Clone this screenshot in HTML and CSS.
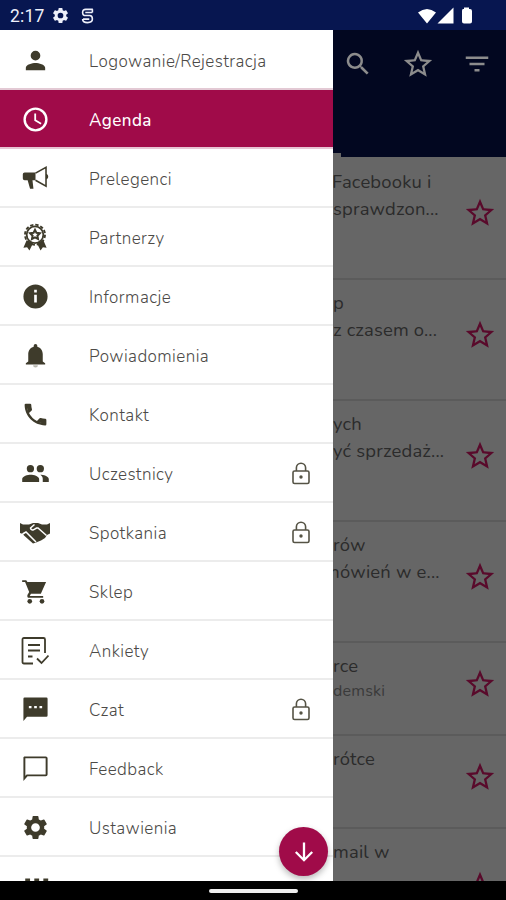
FILE: index.html
```html
<!DOCTYPE html>
<html lang="pl">
<head>
<meta charset="utf-8">
<title>Agenda</title>
<link rel="stylesheet" href="styles.css">
</head>
<body>
<svg class="defs" width="0" height="0">
  <symbol id="star" viewBox="0 0 24 24"><path d="M22 9.24l-7.19-.62L12 2 9.19 8.63 2 9.24l5.46 4.73L5.82 21 12 17.27 18.18 21l-1.63-7.03L22 9.24zM12 15.4l-3.76 2.27 1-4.28-3.32-2.88 4.38-.38L12 6.1l1.71 4.04 4.38.38-3.32 2.88 1 4.28L12 15.4z"/></symbol>
  <symbol id="gear" viewBox="0 0 24 24"><path fill-rule="evenodd" d="M19.14 12.94c.04-.3.06-.61.06-.94s-.02-.64-.07-.94l2.03-1.58a.49.49 0 0 0 .12-.61l-1.92-3.32a.49.49 0 0 0-.59-.22l-2.39.96a7 7 0 0 0-1.62-.94l-.36-2.54a.48.48 0 0 0-.48-.41h-3.84a.48.48 0 0 0-.47.41l-.36 2.54c-.59.24-1.13.57-1.62.94l-2.39-.96a.48.48 0 0 0-.59.22L2.74 8.87a.48.48 0 0 0 .12.61l2.03 1.58a6 6 0 0 0-.02 1.88l-2.03 1.58a.49.49 0 0 0-.12.61l1.92 3.32c.12.22.37.29.59.22l2.39-.96c.5.38 1.03.7 1.62.94l.36 2.54c.05.24.24.41.48.41h3.84c.24 0 .44-.17.47-.41l.36-2.54c.59-.24 1.13-.56 1.62-.94l2.39.96c.22.08.47 0 .59-.22l1.92-3.32a.48.48 0 0 0-.12-.61zM12 15.6A3.6 3.6 0 1 1 12 8.4a3.6 3.6 0 0 1 0 7.2z"/></symbol>
  <symbol id="lock" viewBox="0 0 24 26"><g fill="none" stroke="currentColor" stroke-width="1.6"><rect x="4" y="10" width="16" height="12.500" rx="1.6"/><path d="M7.4 10V6.800a4.600 4.600 0 0 1 9.200 0V10"/></g><circle cx="12" cy="16" r="1.700"/></symbol>
</svg>
<header class="status">
  <span class="time">2:17</span>
  <svg class="status-gear"><use href="#gear"/></svg>
  <svg class="status-s" viewBox="0 0 14 18"><path fill="none" stroke="currentColor" stroke-width="1.800" d="M13 1.500H5Q1.500 1.500 1.500 5T5 8.500H9.500Q12.500 8.500 12.500 12.500T7 16.500T1.500 12.500M4.500 5H12.500M2 12.500H9M12.500 1.500V5"/></svg>
  <svg class="status-right" viewBox="0 0 58 20"><path d="M1 6.500Q10 -.500 19 6.500L10 17.500zM20.500 17.500L36.500 1.500V17.500zM46 3h1V1.500h5V3h1q2 0 2 2V15.500q0 2-2 2h-6q-2 0-2-2V5q0-2 1-2z"/></svg>
</header>
<div class="screen">
  <nav class="drawer">
    <a class="item top"><svg viewBox="0 0 24 24"><path d="M12 12a4 4 0 1 0 0-8 4 4 0 0 0 0 8zm0 2c-2.700 0-8 1.300-8 4v2h16v-2c0-2.700-5.300-4-8-4z"/></svg><span>Logowanie/Rejestracja</span></a>
    <a class="item active"><svg viewBox="0 0 24 24"><path d="M12 2a10 10 0 1 0 0 20 10 10 0 0 0 0-20zm0 18a8 8 0 1 1 0-16 8 8 0 0 1 0 16zm.5-13H11v6l5.250 3.150.750-1.230-4.500-2.670z"/></svg><span>Agenda</span></a>
    <a class="item"><svg viewBox="0 0 24 24"><path d="M1.500 8.500Q1.500 7 3 7h9v6.500H9.500l.8 7H7.500L5.500 13.500H3q-1.500 0-1.500-1.500z"/><path fill="none" stroke="currentColor" stroke-width="1.300" d="M12 7.600L20.700 2.800v15.500L12 13.500M21 8.800q1.800 1.700 0 3.400"/></svg><span>Prelegenci</span></a>
    <a class="item"><svg class="award" viewBox="0 0 28 30"><path d="M5 18L1.500 26l4-.500L8 29l4-8zM23 18l3.500 8-4-.500L20 29l-4-8z"/><circle cx="14" cy="12" r="10.800" fill="none" stroke="currentColor" stroke-width="2" stroke-dasharray="3.600 2.050"/><circle cx="14" cy="12" r="9" fill="#fff" stroke="currentColor" stroke-width="2"/><path fill="none" stroke="currentColor" stroke-width="2.200" d="M14 6.800l1.600 3.200 3.600.500-2.600 2.500.600 3.600-3.200-1.700-3.200 1.700.600-3.600-2.600-2.500 3.600-.500z"/></svg><span>Partnerzy</span></a>
    <a class="item"><svg viewBox="0 0 24 24"><path fill-rule="evenodd" d="M12 2a10 10 0 1 0 0 20 10 10 0 0 0 0-20zm1.100 15h-2.200v-6.500h2.200zm0-8.300h-2.200V6.500h2.200z"/></svg><span>Informacje</span></a>
    <a class="item"><svg viewBox="0 0 24 24"><path d="M18 17v-6c0-3.070-1.640-5.640-4.500-6.320V4a1.500 1.500 0 0 0-3 0v.68C7.630 5.360 6 7.920 6 11v6l-2 1.500v1h16v-1z"/><path fill="#b9b8b0" d="M10 20h4a2 2 0 0 1-4 0z"/></svg><span>Powiadomienia</span></a>
    <a class="item"><svg viewBox="0 0 24 24"><path d="M6.540 5c.06.890.210 1.760.450 2.590l-1.200 1.200A15 15 0 0 1 5.030 5zm9.860 12.020c.850.240 1.720.390 2.600.450v1.490a15 15 0 0 1-3.800-.750zM7.500 3H4a1 1 0 0 0-1 1c0 9.390 7.610 17 17 17a1 1 0 0 0 1-1v-3.490a1 1 0 0 0-1-1c-1.240 0-2.450-.200-3.570-.570a1 1 0 0 0-1.020.240l-2.200 2.200a15 15 0 0 1-6.590-6.590l2.200-2.200a1 1 0 0 0 .250-1.020A11.400 11.400 0 0 1 8.500 4a1 1 0 0 0-1-1z"/><path d="M4 4h3.500l.6 4-2 2zM20 20v-3.500l-4-.6-2 2z"/></svg><span>Kontakt</span></a>
    <a class="item"><svg viewBox="0 0 24 24"><circle cx="7.800" cy="8" r="3"/><circle cx="16" cy="8" r="3"/><path d="M8 13c-2.400 0-7 1.200-7 3.600V19h14v-2.400c0-2.400-4.600-3.600-7-3.600zm8 0c1.500 1 2 2.200 2 3.600V19h5v-2.400c0-2.400-4.600-3.600-7-3.600z"/></svg><span>Uczestnicy</span><svg class="lock"><use href="#lock"/></svg></a>
    <a class="item"><svg class="shake" viewBox="0 0 30 22"><path d="M0 1l3 1.500h6L13 1h5l4 1.500h5L30 1v10.500l-3 1.500-2 3-4 2.500-5 2-3 1-9-8L3 12l-3-1z"/><path fill="none" stroke="#fff" stroke-width="1.500" d="M14.500 2.500L10.500 6q.5 2.500 3 1.800L16.500 6H18l8.500 7.500M2.500 12l3.500-2 10 10"/></svg><span>Spotkania</span><svg class="lock"><use href="#lock"/></svg></a>
    <a class="item"><svg class="cart" viewBox="0 0 24 24"><path d="M1 2v1.500h2.500L7 12l-1.500 2.500Q5 17 7 17h12v-1.500H7.500l1-2H17l4.500-10h-16L4.500 2z"/><circle cx="7.500" cy="20" r="2"/><circle cx="18" cy="20" r="2"/></svg><span>Sklep</span></a>
    <a class="item"><svg class="survey" viewBox="0 0 28 28"><path fill="none" stroke="currentColor" stroke-width="1.800" d="M12 26.500H3q-1.500 0-1.500-1.500V2.500Q1.500 1 3 1h19.500Q24 1 24 2.500V16M7 8h12M7 13.500h12M7 19.500h4.500M16 21.500l4.500 4.500 7-7.500"/></svg><span>Ankiety</span></a>
    <a class="item"><svg viewBox="0 0 24 24"><path fill-rule="evenodd" d="M3 2h18q1 0 1 1v14q0 1-1 1H5l-3 3.500V3q0-1 1-1zm3.500 7v2h2.200V9zm4.400 0v2h2.200V9zm4.400 0v2h2.200V9z"/></svg><span>Czat</span><svg class="lock"><use href="#lock"/></svg></a>
    <a class="item"><svg viewBox="0 0 24 24"><path fill="none" stroke="currentColor" stroke-width="1.600" d="M3 2.800h17.500q.7 0 .7.700V17q0 .7-.7.700H5l-2.200 2.500V3z"/></svg><span>Feedback</span></a>
    <a class="item"><svg viewBox="0 0 24 24"><use href="#gear"/></svg><span>Ustawienia</span></a>
    <a class="item last"><svg viewBox="0 0 24 24"><path d="M3.500 2h4v5h-4zM11 2h4v5h-4zM18.500 2h4v5h-4z"/></svg></a>
    <button class="fab" aria-label="Dalej"><svg viewBox="0 0 24 24"><path fill="none" stroke="currentColor" stroke-width="2.300" d="M12 2.500V20M3.800 12l8.200 8.200 8.200-8.200"/></svg></button>
  </nav>
  <main class="content">
    <div class="toolbar">
      <svg viewBox="0 0 24 24"><path d="M15.500 14h-.790l-.280-.270a6.500 6.500 0 1 0-.700.700l.270.280v.790l5 4.990L20.490 19zm-6 0a4.500 4.500 0 1 1 0-9 4.500 4.500 0 0 1 0 9z"/></svg>
      <svg class="big"><use href="#star"/></svg>
      <svg viewBox="0 0 24 24"><path d="M10 18h4v-2h-4zM3 6v2h18V6zm3 7h12v-2H6z"/></svg>
    </div>
    <section class="talk first"><div><p class="t1">Facebooku i</p><p>sprawdzon...</p></div><svg><use href="#star"/></svg></section>
    <section class="talk"><div><p>p</p><p>z czasem o...</p></div><svg><use href="#star"/></svg></section>
    <section class="talk"><div><p>ych</p><p>yć sprzedaż...</p></div><svg><use href="#star"/></svg></section>
    <section class="talk"><div><p>rów</p><p class="t5">mówień w e...</p></div><svg><use href="#star"/></svg></section>
    <section class="talk short"><div><p>rce</p><p class="speaker">demski</p></div><svg><use href="#star"/></svg></section>
    <section class="talk short"><div><p>rótce</p></div><svg><use href="#star"/></svg></section>
    <section class="talk cut"><div><p>mail w</p></div><svg><use href="#star"/></svg></section>
  </main>
</div>
<footer class="home"><i></i></footer>
</body>
</html>
```
FILE: styles.css
```css
* { box-sizing: border-box; }
body {
  margin: 0;
  width: 506px;
  height: 900px;
  display: flex;
  flex-direction: column;
  overflow: hidden;
  background: #000;
  font-family: Nunito, "Noto Sans", sans-serif;
}
svg { fill: currentColor; flex: none; }
p { margin: 0; }
.defs { position: absolute; }
.status {
  height: 30px;
  flex: none;
  display: flex;
  align-items: center;
  padding: 1px 31px 0 10px;
  background: #071650;
  color: #eef0fa;
}
.time { font: 400 17.5px Roboto, sans-serif; letter-spacing: .2px; width: 41px; }
.status-gear { width: 19px; height: 19px; }
.status-s { width: 13px; height: 16px; margin-left: 11px; }
.status-right { width: 58px; height: 20px; margin-left: auto; color: #fff; }
.screen { display: flex; height: 851px; flex: none; overflow: hidden; }
.drawer {
  position: relative;
  width: 333px;
  flex: none;
  overflow: hidden;
  background: #fff;
  color: #3e3b2b;
}
.item {
  display: flex;
  align-items: center;
  height: 59.040px;
  padding: 2px 20px 0 0;
  border-bottom: 2px solid #ececec;
}
.item.top { height: 60px; border-color: #e3c9d4; }
.item > svg:first-child { width: 29px; height: 29px; margin: 0 20.500px; }
.item > svg.award { width: 26px; height: 29px; margin: 0 22px; }
.item > svg.shake { width: 30px; height: 22px; margin: 0 20px; }
.item > svg.survey { width: 28px; height: 28px; margin: 0 21px; }
.item > svg.cart { width: 28px; height: 28px; margin: 0 21px; }
.item span {
  margin-left: 19px;
  padding-top: 2px;
  flex: 1;
  font-size: 17px;
  font-weight: 300;
  letter-spacing: .42px;
  color: #4c4a47;
  white-space: nowrap;
}
.item.active {
  background: linear-gradient(#a00b49, #a00b49) 0 100% / 6px 2px no-repeat border-box, #a00b49;
  color: #fff;
  border-color: #e7c5d3;
}
.item.active span { color: #fff; font-weight: 500; }
.item .lock { width: 24px; height: 26px; color: #555345; }
.last { align-items: flex-start; padding-top: 19px; border: 0; }
.fab {
  position: absolute;
  left: 279px;
  top: 797px;
  width: 49px;
  height: 49px;
  padding: 0;
  border: 0;
  border-radius: 50%;
  display: grid;
  place-items: center;
  background: #a00b49;
  color: #fff;
  box-shadow: 0 3px 6px rgba(0, 0, 0, .28);
}
.fab svg { width: 24px; height: 24px; }
.content { width: 173px; overflow: hidden; background: #666; }
.toolbar {
  height: 127px;
  display: flex;
  align-items: flex-start;
  justify-content: space-between;
  padding: 19px 14px 0 10px;
  background: linear-gradient(#666, #666) 0 100% / 8px 4px no-repeat #020720;
  color: #8c8c8c;
}
.toolbar svg { width: 30px; height: 30px; }
.toolbar .big { width: 34px; height: 34px; margin-top: -2px; }
.talk {
  display: flex;
  align-items: center;
  height: 121.170px;
  padding-right: 9px;
  border-bottom: 2px solid #5b5b5b;
  color: #2b2b2b;
}
.talk div { flex: 1; height: 100%; padding-top: 9px; overflow: hidden; white-space: nowrap; }
.talk p { height: 27px; line-height: 27px; font-size: 18.400px; font-weight: 400; letter-spacing: .2px; }
.talk svg { width: 34px; height: 34px; color: #590a2b; margin-top: -10px; }
.talk .speaker { height: 24px; line-height: 24px; font-size: 16px; color: #3a3a3a; }
.first { height: 123px; }
.first div { padding-top: 11px; }
.short { height: 93px; }
.cut { height: 123px; border: 0; }
.talk.cut svg { margin-top: -11px; }
.talk .t1 { text-indent: -1px; }
.talk .t5 { text-indent: -9px; }
.talk.cut svg { margin-top: -10px; }
.home { height: 19px; display: flex; justify-content: center; align-items: center; background: #000; }
.home i { width: 89px; height: 4px; border-radius: 2px; background: #eee; }
```
